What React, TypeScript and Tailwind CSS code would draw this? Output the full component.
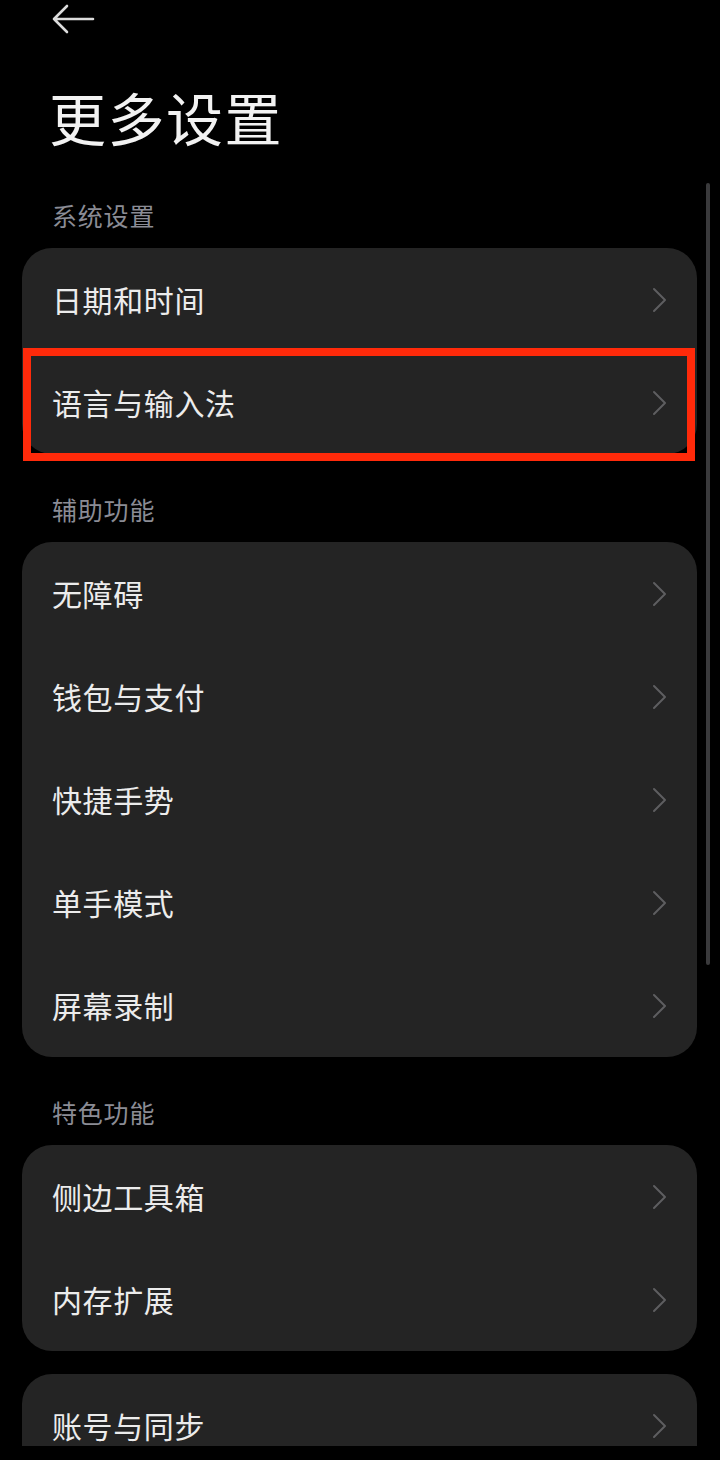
import React from 'react';

const font = { fontFamily: '"Noto Sans CJK SC", "Noto Sans", sans-serif' };

const Chevron = () => (
    <svg width="16" height="26" viewBox="0 0 16 26" fill="none" className="shrink-0">
        <path d="M2 2 L13 13 L2 24" stroke="#5e5e60" strokeWidth={2} strokeLinecap="round" strokeLinejoin="round" />
    </svg>
);

const Row = ({ label, highlight }: { label: string; highlight?: boolean }) => (
    <div className="relative flex items-center justify-between h-[103px] pl-[30px] pr-[29px]">
        <span className="text-[30px] leading-[40px] text-[#ececec] tracking-[0.6px] -mt-[2px]">{label}</span>
        <Chevron />
        {highlight && (
            <div className="absolute top-[-3px] bottom-[-7px] left-[1px] right-[2px] border-[8px] border-[#ff2a0a] pointer-events-none" />
        )}
    </div>
);

const SectionHeader = ({ title }: { title: string }) => (
    <div className="pt-[38px] pb-[16px] pl-[52px] h-[88px]">
        <span className="block text-[25px] leading-[34px] tracking-[0.8px] text-[#8b8c95]">{title}</span>
    </div>
);

const Card = ({ children }: { children: React.ReactNode }) => (
    <div className="mx-[22px] w-[675px] bg-[#242424] rounded-[30px]">{children}</div>
);

export default function App() {
    return (
        <div className="relative w-[720px] h-[1460px] bg-black overflow-hidden" style={font}>
            <div className="h-[1446px] overflow-hidden">
                {/* Back arrow */}
                <div className="pt-[3px] pl-[51px] h-[36px]">
                    <svg width="44" height="32" viewBox="0 0 44 32" fill="none">
                        <path d="M3 16 H42 M16 3 L3 16 L16 29" stroke="#dcdcdc" strokeWidth={2.6} strokeLinecap="round" strokeLinejoin="round" />
                    </svg>
                </div>

                {/* Title */}
                <h1 className="mt-[45px] pl-[49px] text-[57px] leading-[70px] text-[#f2f2f2] font-normal tracking-[1.5px]">更多设置</h1>

                <div className="pt-[47px] pb-[16px] pl-[52px]">
                    <span className="block text-[25px] leading-[34px] tracking-[0.8px] text-[#8b8c95]">系统设置</span>
                </div>
                <Card>
                    <Row label="日期和时间" />
                    <Row label="语言与输入法" highlight />
                </Card>

                <SectionHeader title="辅助功能" />
                <Card>
                    <Row label="无障碍" />
                    <Row label="钱包与支付" />
                    <Row label="快捷手势" />
                    <Row label="单手模式" />
                    <Row label="屏幕录制" />
                </Card>

                <SectionHeader title="特色功能" />
                <Card>
                    <Row label="侧边工具箱" />
                    <Row label="内存扩展" />
                </Card>

                <div className="mt-[23px]">
                    <Card>
                        <Row label="账号与同步" />
                    </Card>
                </div>
            </div>

            {/* Scrollbar */}
            <div className="absolute left-[706px] top-[183px] w-[4px] h-[782px] rounded-full bg-[#3a3a3c]" />
        </div>
    );
}
